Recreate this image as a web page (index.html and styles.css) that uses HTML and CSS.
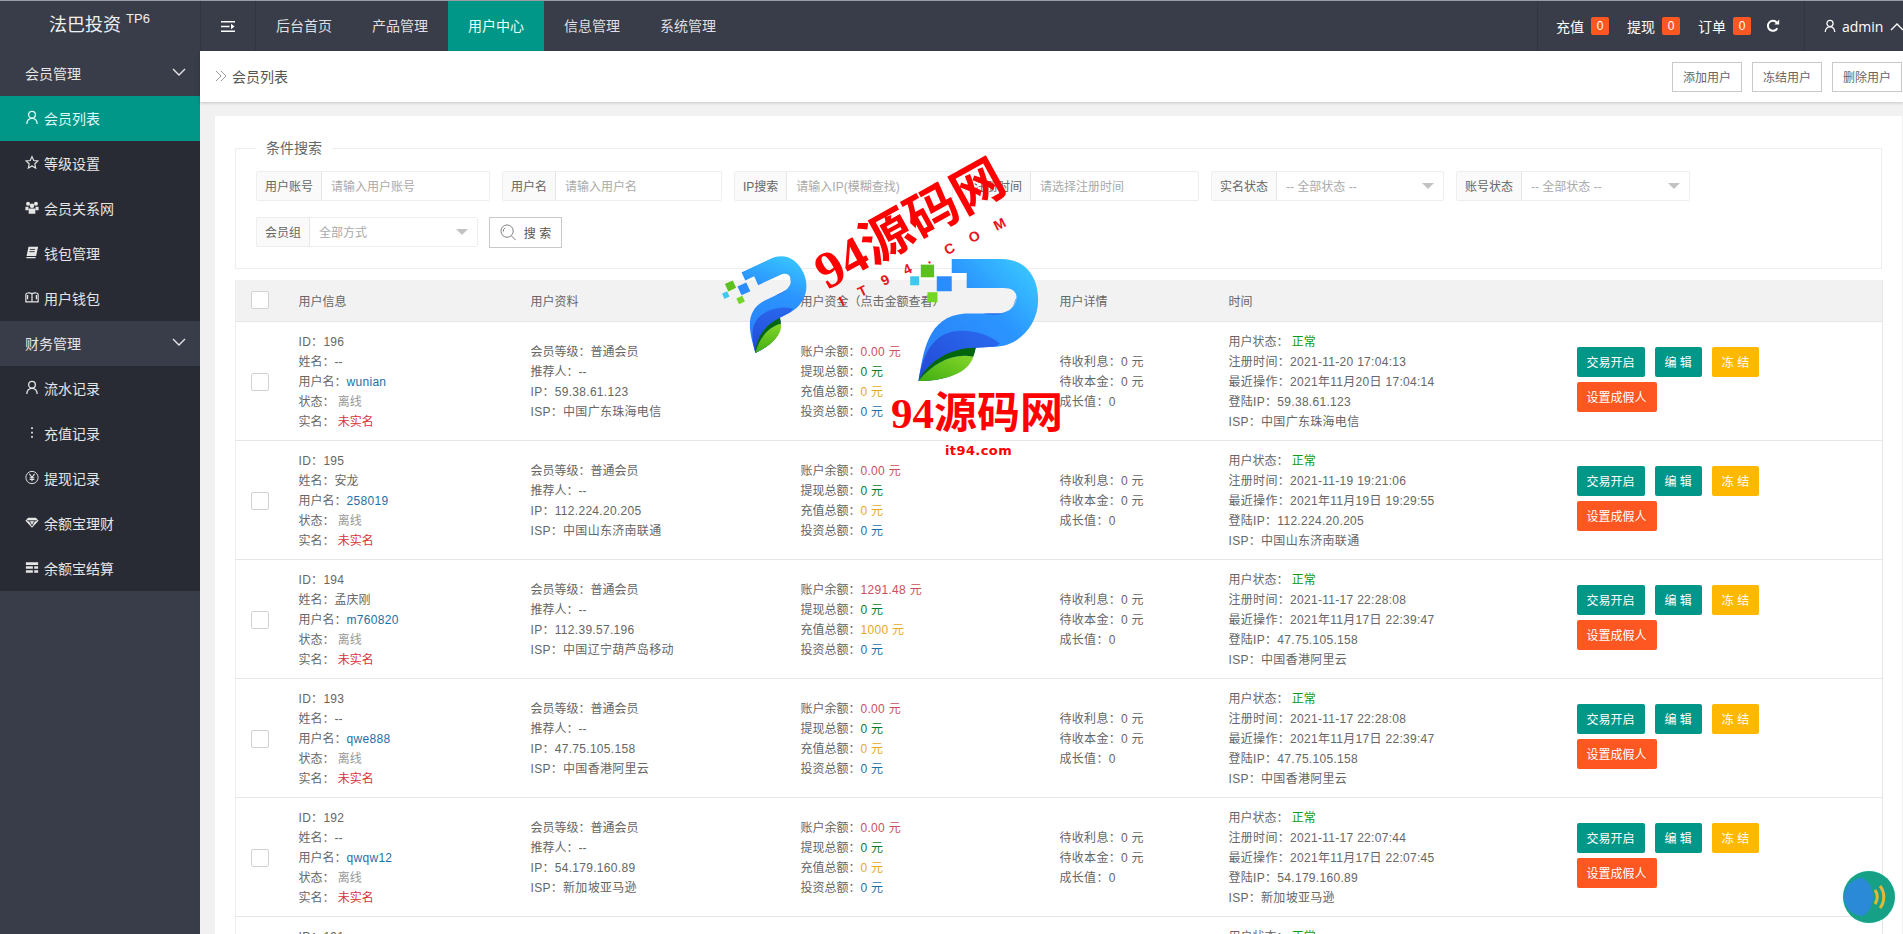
FILE: index.html
```html
<!DOCTYPE html>
<html lang="zh-CN">
<head>
<meta charset="utf-8">
<title>会员列表</title>
<link rel="stylesheet" href="styles.css">
</head>
<body>
<svg class="defs" width="0" height="0" aria-hidden="true">
  <defs>
    <symbol id="i-user" viewBox="0 0 14 16"><circle cx="7" cy="5" r="3.6" fill="none" stroke="currentColor" stroke-width="1.4"/><path d="M1.4 15c.3-3.6 2.4-6 5.6-6s5.3 2.4 5.6 6" fill="none" stroke="currentColor" stroke-width="1.4"/></symbol>
    <symbol id="i-chev" viewBox="0 0 14 9"><path d="M1 1l6 6 6-6" fill="none" stroke="currentColor" stroke-width="1.4"/></symbol>
    <symbol id="logo-p" viewBox="570 118 390 370">
      <rect x="602" y="135" width="40" height="38" fill="#5cc01e"/>
      <rect x="650" y="170" width="45" height="45" fill="#2a8cff"/>
      <rect x="570" y="170" width="27" height="27" fill="#3cc8f0"/>
      <rect x="622" y="218" width="30" height="30" fill="#74d624"/>
      <path d="M695 118H845C915 118 955 170 955 240C955 320 895 382 820 382L767 385C750 460 680 485 595 485C610 400 620 290 735 282H830C870 282 890 255 890 232C890 215 875 205 850 205H740V160H695Z" fill="url(#pg)"/>
      <path d="M885 245C878 272 855 282 830 282H790C830 290 880 285 890 232Z" fill="#2559e0"/>
      <path d="M595 485C605 420 630 345 705 335C750 330 800 340 840 372C835 376 828 382 820 382L767 385C750 460 680 485 595 485Z" fill="url(#pb)"/>
      <path d="M595 485C625 425 690 385 767 385C765 398 762 405 760 412C700 400 640 430 595 485Z" fill="#04660c"/>
      <path d="M595 485C640 430 700 400 760 412C745 460 680 485 595 485Z" fill="url(#pl)"/>
    </symbol>
    <linearGradient id="pg" x1="0" y1="1" x2="1" y2="0"><stop offset="0" stop-color="#2a7cf5"/><stop offset=".6" stop-color="#2b95ff"/><stop offset="1" stop-color="#3bd0ff"/></linearGradient>
    <linearGradient id="pb" x1="0" y1="1" x2="1" y2="0"><stop offset="0" stop-color="#2347d6"/><stop offset="1" stop-color="#2a6cf0"/></linearGradient>
    <linearGradient id="pl" x1="0" y1="1" x2="1" y2="0"><stop offset="0" stop-color="#3fae10"/><stop offset="1" stop-color="#86d62a"/></linearGradient>
  </defs>
</svg>

<header class="topbar">
  <div class="brand">法巴投资 <sup>TP6</sup></div>
  <div class="toggle">
    <svg class="toggle-icon" viewBox="0 0 14 13"><path d="M0 1h14v1.6H0zM0 10.4h14V12H0zM0 5.7h8.5v1.6H0zM10 3.8l3.6 2.7L10 9.200z" fill="currentColor"/></svg>
  </div>
  <nav class="topnav">
    <a class="topnav-item">后台首页</a>
    <a class="topnav-item">产品管理</a>
    <a class="topnav-item is-active">用户中心</a>
    <a class="topnav-item">信息管理</a>
    <a class="topnav-item">系统管理</a>
  </nav>
  <div class="top-right">
    <div class="stats">
      <span class="stat">充值<b class="badge">0</b></span>
      <span class="stat">提现<b class="badge">0</b></span>
      <span class="stat">订单<b class="badge">0</b></span>
      <svg class="refresh" viewBox="0 0 14 14"><path d="M11.300 9.200A5 5 0 1 1 10.800 3.700" fill="none" stroke="currentColor" stroke-width="2"/><path d="M8.400 5.400H13.200V.6z" fill="currentColor"/></svg>
    </div>
    <div class="account">
      <svg class="account-icon"><use href="#i-user"/></svg>
      <span class="account-name">admin</span>
      <svg class="account-arrow"><use href="#i-chev"/></svg>
    </div>
  </div>
</header>

<div class="shell">
  <aside class="sidebar">
    <div class="side-group">会员管理<svg class="side-chev"><use href="#i-chev"/></svg></div>
    <a class="side-item is-active"><svg class="side-icon"><use href="#i-user"/></svg>会员列表</a>
    <a class="side-item"><svg class="side-icon" viewBox="0 0 16 16"><path d="M8 1.300l2 4.500 4.800.5-3.600 3.200 1 4.800L8 11.900l-4.200 2.400 1-4.800L1.200 6.300 6 5.800z" fill="none" stroke="currentColor" stroke-width="1.300"/></svg>等级设置</a>
    <a class="side-item"><svg class="side-icon" viewBox="0 0 16 16"><circle cx="3.500" cy="3.800" r="2.300" fill="currentColor"/><circle cx="12.500" cy="3.800" r="2.300" fill="currentColor"/><circle cx="8" cy="6" r="2.600" fill="currentColor"/><path d="M.5 7h3.400v4H.5zM12.100 7h3.400v4h-3.400zM4.200 9h7.600v6H4.200z" fill="currentColor"/></svg>会员关系网</a>
    <a class="side-item"><svg class="side-icon" viewBox="0 0 16 16"><path d="M4 1.500h11l-2.300 10.500H1.800zM1.500 13h10.800l-.3 1.500H1.600z" fill="currentColor"/><path d="M5.500 4.500h6M5 7h6" stroke="#282b33" stroke-width="1"/></svg>钱包管理</a>
    <a class="side-item"><svg class="side-icon" viewBox="0 0 16 16"><path d="M1 4.500C1 3 4 2 8 3.500 12 2 15 3 15 4.500V13H1zM8 3.500V13M3 5v5M13 5v5" fill="none" stroke="currentColor" stroke-width="1.400"/></svg>用户钱包</a>
    <div class="side-group">财务管理<svg class="side-chev"><use href="#i-chev"/></svg></div>
    <a class="side-item"><svg class="side-icon"><use href="#i-user"/></svg>流水记录</a>
    <a class="side-item"><svg class="side-icon" viewBox="0 0 16 16"><path d="M7 2h2v2H7zM7 7h2v2H7zM7 12h2v2H7z" fill="currentColor"/></svg>充值记录</a>
    <a class="side-item"><svg class="side-icon" viewBox="0 0 16 16"><circle cx="8" cy="8" r="7" fill="none" stroke="currentColor" stroke-width="1.100"/><path d="M5 3.800l3 4 3-4M8 7.800v4.600M5.300 8.200h5.400M5.300 10.200h5.400" fill="none" stroke="currentColor" stroke-width="1.200"/></svg>提现记录</a>
    <a class="side-item"><svg class="side-icon" viewBox="0 0 16 16"><path d="M3.500 2.500h9L15.500 6 8 14 .5 6z" fill="currentColor"/><path d="M2.500 6h11M5 6l3 6 3-6" fill="none" stroke="#282b33" stroke-width="1"/></svg>余额宝理财</a>
    <a class="side-item"><svg class="side-icon" viewBox="0 0 16 16"><path d="M1 2h14v3H1zM1 6.500h8v3H1zM10.500 6.500H15v3h-4.500zM1 11h8v3H1zM10.500 11H15v3h-4.500z" fill="currentColor"/></svg>余额宝结算</a>
  </aside>

  <main class="main">
    <div class="crumbbar">
      <div class="crumb">
        <svg class="crumb-icon" viewBox="0 0 12 12"><path d="M1 1l5 5-5 5M6 1l5 5-5 5" fill="none" stroke="currentColor" stroke-width="1"/></svg>
        会员列表
      </div>
      <div class="crumb-actions">
        <button class="btn-line">添加用户</button>
        <button class="btn-line">冻结用户</button>
        <button class="btn-line">删除用户</button>
      </div>
    </div>

    <section class="card">
      <fieldset class="filters">
        <legend class="filters-title">条件搜索</legend>
        <div class="filter-row">
          <div class="field w-234"><span class="field-label">用户账号</span><span class="field-input">请输入用户账号</span></div>
          <div class="field w-220"><span class="field-label">用户名</span><span class="field-input">请输入用户名</span></div>
          <div class="field w-219"><span class="field-label">IP搜索</span><span class="field-input">请输入IP(模糊查找)</span></div>
          <div class="field w-234"><span class="field-label">注册时间</span><span class="field-input">请选择注册时间</span></div>
          <div class="field w-233"><span class="field-label">实名状态</span><span class="field-input field-select">-- 全部状态 --</span></div>
          <div class="field w-234"><span class="field-label">账号状态</span><span class="field-input field-select">-- 全部状态 --</span></div>
          <div class="field w-222"><span class="field-label">会员组</span><span class="field-input field-select">全部方式</span></div>
          <button class="btn-search">
            <svg class="search-icon" viewBox="0 0 18 18"><circle cx="7.500" cy="7.500" r="6.500" fill="none" stroke="currentColor" stroke-width="1"/><path d="M3.500 8A4 4 0 0 1 5.500 4M12 12.500l4.500 4.500" fill="none" stroke="currentColor" stroke-width="1"/></svg>
            搜 索
          </button>
        </div>
      </fieldset>

      <table class="users">
        <colgroup>
          <col class="c-check"><col class="c-info"><col class="c-profile"><col class="c-money"><col class="c-detail"><col class="c-time"><col class="c-ops">
        </colgroup>
        <thead>
          <tr><th><span class="check"></span></th><th>用户信息</th><th>用户资料</th><th>用户资金（点击金额查看）</th><th>用户详情</th><th>时间</th><th></th></tr>
        </thead>
        <tbody>
          <tr>
            <td><span class="check"></span></td>
            <td><p class="n">ID：196</p><p>姓名：--</p><p>用户名：<span class="c-blue n">wunian</span></p><p>状态：&nbsp;<span class="c-gray">离线</span></p><p>实名：&nbsp;<span class="c-red">未实名</span></p></td>
            <td><p>会员等级：普通会员</p><p>推荐人：--</p><p class="n">IP：59.38.61.123</p><p class="n">ISP：中国广东珠海电信</p></td>
            <td><p>账户余额：<span class="c-rose n">0.00 元</span></p><p>提现总额：<span class="c-green n">0 元</span></p><p>充值总额：<span class="c-amber n">0 元</span></p><p>投资总额：<span class="c-blue n">0 元</span></p></td>
            <td><p class="n">待收利息：0 元</p><p class="n">待收本金：0 元</p><p class="n">成长值：0</p></td>
            <td><p>用户状态：&nbsp;<span class="c-ok">正常</span></p><p class="n">注册时间：2021-11-20 17:04:13</p><p class="n">最近操作：2021年11月20日 17:04:14</p><p class="n">登陆IP：59.38.61.123</p><p class="n">ISP：中国广东珠海电信</p></td>
            <td class="ops"><button class="op op-teal">交易开启</button><button class="op op-teal">编 辑</button><button class="op op-amber">冻 结</button><button class="op op-orange">设置成假人</button></td>
          </tr>
          <tr>
            <td><span class="check"></span></td>
            <td><p class="n">ID：195</p><p>姓名：安龙</p><p>用户名：<span class="c-blue n">258019</span></p><p>状态：&nbsp;<span class="c-gray">离线</span></p><p>实名：&nbsp;<span class="c-red">未实名</span></p></td>
            <td><p>会员等级：普通会员</p><p>推荐人：--</p><p class="n">IP：112.224.20.205</p><p class="n">ISP：中国山东济南联通</p></td>
            <td><p>账户余额：<span class="c-rose n">0.00 元</span></p><p>提现总额：<span class="c-green n">0 元</span></p><p>充值总额：<span class="c-amber n">0 元</span></p><p>投资总额：<span class="c-blue n">0 元</span></p></td>
            <td><p class="n">待收利息：0 元</p><p class="n">待收本金：0 元</p><p class="n">成长值：0</p></td>
            <td><p>用户状态：&nbsp;<span class="c-ok">正常</span></p><p class="n">注册时间：2021-11-19 19:21:06</p><p class="n">最近操作：2021年11月19日 19:29:55</p><p class="n">登陆IP：112.224.20.205</p><p class="n">ISP：中国山东济南联通</p></td>
            <td class="ops"><button class="op op-teal">交易开启</button><button class="op op-teal">编 辑</button><button class="op op-amber">冻 结</button><button class="op op-orange">设置成假人</button></td>
          </tr>
          <tr>
            <td><span class="check"></span></td>
            <td><p class="n">ID：194</p><p>姓名：孟庆刚</p><p>用户名：<span class="c-blue n">m760820</span></p><p>状态：&nbsp;<span class="c-gray">离线</span></p><p>实名：&nbsp;<span class="c-red">未实名</span></p></td>
            <td><p>会员等级：普通会员</p><p>推荐人：--</p><p class="n">IP：112.39.57.196</p><p class="n">ISP：中国辽宁葫芦岛移动</p></td>
            <td><p>账户余额：<span class="c-rose n">1291.48 元</span></p><p>提现总额：<span class="c-green n">0 元</span></p><p>充值总额：<span class="c-amber n">1000 元</span></p><p>投资总额：<span class="c-blue n">0 元</span></p></td>
            <td><p class="n">待收利息：0 元</p><p class="n">待收本金：0 元</p><p class="n">成长值：0</p></td>
            <td><p>用户状态：&nbsp;<span class="c-ok">正常</span></p><p class="n">注册时间：2021-11-17 22:28:08</p><p class="n">最近操作：2021年11月17日 22:39:47</p><p class="n">登陆IP：47.75.105.158</p><p class="n">ISP：中国香港阿里云</p></td>
            <td class="ops"><button class="op op-teal">交易开启</button><button class="op op-teal">编 辑</button><button class="op op-amber">冻 结</button><button class="op op-orange">设置成假人</button></td>
          </tr>
          <tr>
            <td><span class="check"></span></td>
            <td><p class="n">ID：193</p><p>姓名：--</p><p>用户名：<span class="c-blue n">qwe888</span></p><p>状态：&nbsp;<span class="c-gray">离线</span></p><p>实名：&nbsp;<span class="c-red">未实名</span></p></td>
            <td><p>会员等级：普通会员</p><p>推荐人：--</p><p class="n">IP：47.75.105.158</p><p class="n">ISP：中国香港阿里云</p></td>
            <td><p>账户余额：<span class="c-rose n">0.00 元</span></p><p>提现总额：<span class="c-green n">0 元</span></p><p>充值总额：<span class="c-amber n">0 元</span></p><p>投资总额：<span class="c-blue n">0 元</span></p></td>
            <td><p class="n">待收利息：0 元</p><p class="n">待收本金：0 元</p><p class="n">成长值：0</p></td>
            <td><p>用户状态：&nbsp;<span class="c-ok">正常</span></p><p class="n">注册时间：2021-11-17 22:28:08</p><p class="n">最近操作：2021年11月17日 22:39:47</p><p class="n">登陆IP：47.75.105.158</p><p class="n">ISP：中国香港阿里云</p></td>
            <td class="ops"><button class="op op-teal">交易开启</button><button class="op op-teal">编 辑</button><button class="op op-amber">冻 结</button><button class="op op-orange">设置成假人</button></td>
          </tr>
          <tr>
            <td><span class="check"></span></td>
            <td><p class="n">ID：192</p><p>姓名：--</p><p>用户名：<span class="c-blue n">qwqw12</span></p><p>状态：&nbsp;<span class="c-gray">离线</span></p><p>实名：&nbsp;<span class="c-red">未实名</span></p></td>
            <td><p>会员等级：普通会员</p><p>推荐人：--</p><p class="n">IP：54.179.160.89</p><p class="n">ISP：新加坡亚马逊</p></td>
            <td><p>账户余额：<span class="c-rose n">0.00 元</span></p><p>提现总额：<span class="c-green n">0 元</span></p><p>充值总额：<span class="c-amber n">0 元</span></p><p>投资总额：<span class="c-blue n">0 元</span></p></td>
            <td><p class="n">待收利息：0 元</p><p class="n">待收本金：0 元</p><p class="n">成长值：0</p></td>
            <td><p>用户状态：&nbsp;<span class="c-ok">正常</span></p><p class="n">注册时间：2021-11-17 22:07:44</p><p class="n">最近操作：2021年11月17日 22:07:45</p><p class="n">登陆IP：54.179.160.89</p><p class="n">ISP：新加坡亚马逊</p></td>
            <td class="ops"><button class="op op-teal">交易开启</button><button class="op op-teal">编 辑</button><button class="op op-amber">冻 结</button><button class="op op-orange">设置成假人</button></td>
          </tr>
          <tr class="row-partial">
            <td></td>
            <td><p class="n">ID：191</p></td>
            <td></td><td></td><td></td>
            <td><p>用户状态：&nbsp;<span class="c-ok">正常</span></p></td>
            <td></td>
          </tr>
        </tbody>
      </table>
    </section>
  </main>
</div>

<div class="watermark" aria-hidden="true">
  <svg class="wm-p wm-p-small"><use href="#logo-p"/></svg>
  <svg class="wm-p wm-p-large"><use href="#logo-p"/></svg>
  <div class="wm-text wm-text-tilt">94源码网</div>
  <div class="wm-sub-tilt">IT94.COM</div>
  <div class="wm-text wm-text-flat">94源码网</div>
  <div class="wm-url">it94.com</div>
</div>

<div class="float-ball">
  <svg class="float-ball-icon" viewBox="0 0 52 52"><path d="M20 7a19 19 0 0 0 0 38c5-3 10-10 10-19S25 10 20 7z" fill="#2a8ad8"/><path d="M32 19c3 4 3 10 0 14M37 15c5 6 5 16 0 22" fill="none" stroke="#e0b83a" stroke-width="3"/></svg>
</div>
</body>
</html>
```

FILE: styles.css
```css
* { box-sizing: border-box; }

html, body {
  margin: 0;
  height: 100%;
  overflow: hidden;
}

body {
  position: relative;
  display: flex;
  flex-direction: column;
  font-family: "Liberation Sans", "Noto Sans CJK SC", sans-serif;
  font-size: 12px;
  color: #666;
  background: #f1f1f1;
}

p { margin: 0; line-height: 20px; white-space: nowrap; }
a { color: inherit; text-decoration: none; }
button { font-family: inherit; cursor: pointer; }
.defs { position: absolute; }

/* top bar */
.topbar {
  flex: 0 0 51px;
  display: flex;
  background: #393d49;
  color: #fff;
  border-top: 1px solid #9a9da5;
  font-size: 14px;
}

.brand {
  width: 200px;
  padding-left: 49px;
  font-size: 18px;
  line-height: 48px;
  color: #f0f0f0;
  white-space: nowrap;
}

.brand sup {
  font-size: 13px;
  line-height: 0;
  vertical-align: 8px;
}

.toggle {
  width: 56px;
  display: flex;
  align-items: center;
  justify-content: center;
  border-left: 1px solid #33363f;
  border-right: 1px solid #33363f;
}

.toggle-icon { width: 14px; height: 13px; color: #fff; }

.topnav { display: flex; }

.topnav-item {
  width: 96px;
  text-align: center;
  line-height: 50px;
  color: rgba(255, 255, 255, .85);
}

.topnav-item.is-active { background: #009688; color: #e8fffb; }

.top-right { margin-left: auto; display: flex; }

.stats {
  display: flex;
  align-items: center;
  width: 268px;
  padding-left: 18px;
  border-left: 1px solid #33363f;
  border-right: 1px solid #33363f;
}

.stat { display: flex; align-items: center; margin-right: 18px; }
.stat:last-of-type { margin-right: 12px; }

.badge {
  width: 18px;
  height: 18px;
  margin-left: 7px;
  border-radius: 2px;
  background: #ff5722;
  font-weight: normal;
  font-size: 12px;
  line-height: 18px;
  text-align: center;
}

.refresh { width: 14px; height: 14px; margin-left: 3px; }

.account {
  width: 98px;
  display: flex;
  align-items: center;
  padding-left: 19px;
  white-space: nowrap;
}

.account-icon { width: 12px; height: 14px; flex: none; margin-right: 6px; }
.account-name { font-family: "Open Sans", sans-serif; font-size: 14px; }
.account-arrow { width: 14px; height: 9px; flex: none; margin-left: 7px; transform: rotate(180deg); }

/* shell */
.shell { flex: 1; display: flex; min-height: 0; }

.sidebar {
  flex: 0 0 200px;
  background: #393d49;
  color: #e6e6e6;
  font-size: 14px;
}

.side-group {
  height: 45px;
  padding: 0 14px 2px 25px;
  display: flex;
  align-items: center;
  justify-content: space-between;
}

.side-chev { width: 14px; height: 9px; }

.side-item {
  height: 45px;
  padding: 0 0 2px 25px;
  display: flex;
  align-items: center;
  background: #282b33;
}

.side-item.is-active { background: #009688; color: #dffbf6; }

.side-icon { width: 14px; height: 15px; flex: none; margin-right: 5px; }

/* main */
.main { flex: 1; min-width: 0; display: flex; flex-direction: column; }

.crumbbar {
  flex: 0 0 51px;
  display: flex;
  align-items: center;
  justify-content: space-between;
  padding: 0 1px 0 15px;
  background: #fff;
  box-shadow: 0 1px 3px rgba(0, 0, 0, .18);
  position: relative;
}

.crumb { display: flex; align-items: center; margin-bottom: 2px; font-size: 14px; color: #555; }
.crumb-icon { width: 12px; height: 12px; margin-right: 5px; color: #999; }

.crumb-actions { display: flex; gap: 10px; }

.btn-line {
  width: 70px;
  height: 30px;
  padding: 0;
  background: #fff;
  border: 1px solid #c9c9c9;
  font-size: 12px;
  color: #666;
}

.card {
  flex: 1;
  margin: 14px 1px 0 15px;
  padding: 22px 20px 0 20px;
  background: #fff;
  min-height: 0;
  overflow: hidden;
}

/* filters */
.filters {
  margin: 0 0 11px;
  padding: 13px 20px 20px;
  height: 131px;
  border: 1px solid #eee;
  min-width: 0;
}

.filters-title {
  padding: 0 10px;
  font-size: 14px;
  line-height: 20px;
  color: #666;
}

.filter-row {
  display: flex;
  flex-wrap: wrap;
  gap: 16px 12px;
}

.field {
  display: flex;
  height: 30px;
  background: #fff;
  border: 1px solid #eee;
  border-radius: 2px;
}

.w-234 { width: 234px; }
.w-233 { width: 233px; }
.w-222 { width: 222px; margin-right: -1px; }
.w-220 { width: 220px; }
.w-219 { width: 219px; }

.field-label {
  flex: none;
  padding: 2px 8px 0;
  background: #fafafa;
  border-right: 1px solid #e6e6e6;
  line-height: 26px;
  color: #666;
}

.field-input {
  flex: 1;
  padding: 2px 9px 0;
  line-height: 26px;
  color: #aaa;
  white-space: nowrap;
  overflow: hidden;
}

.field-select { position: relative; }

.field-select::after {
  content: "";
  position: absolute;
  right: 9px;
  top: 11px;
  border: 6px solid transparent;
  border-top-color: #c2c2c2;
  border-bottom: 0;
}

.btn-search {
  width: 73px;
  height: 31px;
  padding: 0;
  display: flex;
  align-items: center;
  justify-content: center;
  background: #fff;
  border: 1px solid #c9c9c9;
  font-size: 12px;
  color: #555;
}

.search-icon { width: 17px; height: 17px; margin-right: 7px; color: #777; }

/* table */
.users {
  width: 1647px;
  table-layout: fixed;
  border-collapse: collapse;
  border-left: 1px solid #eee;
  border-right: 1px solid #e6e6e6;
}

.c-check { width: 48px; }
.c-info { width: 232px; }
.c-profile { width: 270px; }
.c-money { width: 259px; }
.c-detail { width: 169px; }
.c-time { width: 348px; }
.c-ops { width: 321px; }

.users th {
  height: 41px;
  padding: 0 15px;
  background: #f2f2f2;
  font-weight: normal;
  text-align: left;
  color: #666;
  border-bottom: 1px solid #e6e6e6;
  white-space: nowrap;
}

.users td {
  height: 119px;
  padding: 10px 15px 8px;
  vertical-align: middle;
  border-bottom: 1px solid #e6e6e6;
}

.users .row-partial td { vertical-align: top; }

.check {
  display: block;
  width: 18px;
  height: 18px;
  background: #fff;
  border: 1px solid #d2d2d2;
  border-radius: 2px;
}

.n { letter-spacing: .3px; }

.c-blue { color: #1e6fa8; }
.c-gray { color: #999; }
.c-red { color: #d8323a; }
.c-rose { color: #c9505c; }
.c-green { color: #0b7a2a; }
.c-amber { color: #e8a920; }
.c-ok { color: #109a10; }

.ops { font-size: 0; }

.op {
  height: 30px;
  margin: 0 10px 5px 0;
  padding: 0 10px;
  border: 0;
  border-radius: 2px;
  color: #fff;
  font-size: 12px;
  white-space: nowrap;
  vertical-align: top;
}

.op-teal { background: #009688; }
.op-amber { background: #ffb800; }
.op-orange { background: #ff5722; display: block; }

/* watermark overlay */
.watermark {
  position: absolute;
  inset: 0;
  pointer-events: none;
  overflow: hidden;
}

.wm-p { position: absolute; }
.wm-p-large { left: 910px; top: 259px; width: 130px; height: 123px; }
.wm-p-small { left: 730px; top: 262px; width: 84px; height: 80px; transform: rotate(-25deg); }

.wm-text {
  position: absolute;
  font-family: "Liberation Serif", "Noto Sans CJK SC", serif;
  font-weight: 700;
  color: #f00;
  line-height: 1;
  white-space: nowrap;
}

.wm-text-tilt {
  left: 910px;
  top: 225px;
  font-size: 52px;
  transform: translate(-50%, -50%) rotate(-29deg);
}

.wm-text-flat { left: 891px; top: 392px; font-size: 43px; }

.wm-sub-tilt {
  position: absolute;
  left: 930px;
  top: 258px;
  font-size: 14px;
  font-weight: 700;
  letter-spacing: 17px;
  color: #e8141c;
  white-space: nowrap;
  transform: translate(-50%, -50%) rotate(-26deg);
}

.wm-url {
  position: absolute;
  left: 945px;
  top: 443px;
  font-family: "DejaVu Sans", sans-serif;
  font-size: 13px;
  font-weight: 700;
  color: #f00;
  letter-spacing: .4px;
}

.float-ball {
  position: absolute;
  left: 1843px;
  top: 871px;
  width: 52px;
  height: 52px;
  border-radius: 50%;
  background: #16a085;
  box-shadow: 0 0 2px #b8fff4;
  overflow: hidden;
}

.float-ball-icon { display: block; width: 52px; height: 52px; }
```
